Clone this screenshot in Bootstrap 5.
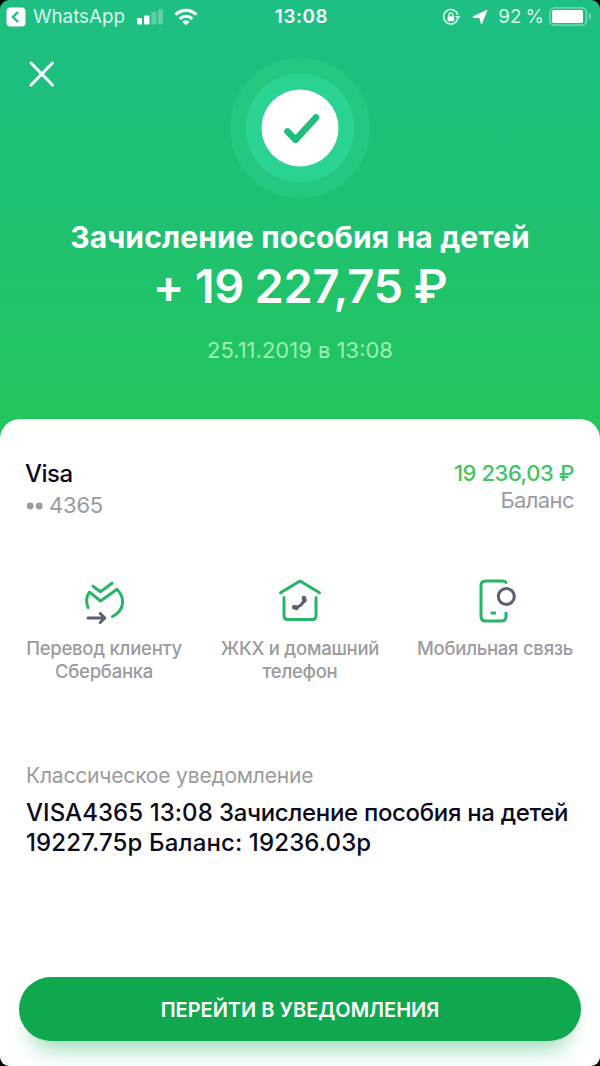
<!DOCTYPE html>
<html lang="ru">
<head>
<meta charset="utf-8">
<meta name="viewport" content="width=device-width, initial-scale=1">
<title>Зачисление пособия на детей</title>
<link href="https://cdn.jsdelivr.net/npm/bootstrap@5.3.0/dist/css/bootstrap.min.css" rel="stylesheet">
<style>
body{background:#000;font-family:Inter,"Liberation Sans",sans-serif;color:#0b0b1c}
svg{display:block;flex:none;overflow:visible}
.screen{width:600px;height:1066px;border-radius:9px;background:linear-gradient(#1dbf84 0,#1fc171 220px,#23c65c 419px,#23c65c 100%)}
.statusbar{height:33px;color:#dcfcee;font-size:18.8px;line-height:33px;padding:0 8px 0 6px}
.side{flex:1 1 0}
.back-app{margin-left:7px}
.wifi{margin-left:11px}
.arrow{margin-left:11px}
.percent{margin-left:10px;letter-spacing:.1px;word-spacing:-1.5px}
.battery{margin-left:5px}
.clock{font-weight:600;letter-spacing:.6px;padding-left:5px}
.hero{height:386px;padding-top:24px}
.close-x{left:28px;top:27px}
.hero-title{font-size:30px;line-height:36px;font-weight:700;letter-spacing:.14px;margin-top:20px}
.hero-sum{font-size:47px;line-height:56px;font-weight:600;letter-spacing:-.3px;word-spacing:-.9px;margin-top:3px}
.hero-date{font-size:22px;line-height:28px;color:#9df0b4;margin-top:22px}
.sheet{border-radius:20px 20px 9px 9px;padding:39px 26px 0}
.gray{color:#9b9ba0}
.card-name{font-size:24px;line-height:32px;font-weight:500;letter-spacing:-.5px;margin-left:-1px}
.card-num{font-size:22px;line-height:32px;letter-spacing:-.2px;margin-top:-1px}
.dot-pair{width:17px;margin-right:6px}
.balance{font-size:22px;line-height:28px;font-weight:500;letter-spacing:-.45px;color:#41c463;padding-top:1px}
.balance-label{font-size:22px;line-height:27px;letter-spacing:-.6px}
.actions{margin:56px -26px 0}
.actions svg{margin:0 auto 14px}
.action-label{font-size:18.5px;line-height:23px;font-weight:500;letter-spacing:-.25px}
.shift-left{padding-left:9px;margin-left:-2px;margin-right:2px}
.shift-right{padding-right:9px;margin-left:1px;margin-right:-1px}
.note-label{font-size:21px;line-height:28px;letter-spacing:-.18px;margin-top:79px}
.note-text{font-size:24px;line-height:30px;font-weight:500;letter-spacing:-.32px;margin-top:8px}
.note-sum{letter-spacing:.13px}
.note-card{letter-spacing:.06px}
.cta{height:64px;margin:0 -7px 25px;--bs-btn-bg:#0fa84e;--bs-btn-color:#fff;--bs-btn-border-width:0;--bs-btn-font-size:20px;--bs-btn-font-weight:600;padding-top:8px;box-shadow:0 20px 22px -12px rgba(15,168,78,.42)}
</style>
</head>
<body>
<main class="screen overflow-hidden d-flex flex-column">
  <div class="statusbar d-flex align-items-center">
    <div class="side d-flex align-items-center">
      <svg width="20" height="20" viewBox="0 0 20 20"><rect x=".5" y=".5" width="19" height="19" rx="4" fill="#fff"/><path d="M12 5 7 10l5 5" fill="none" stroke="#1fbf83" stroke-width="2.4"/></svg>
      <span class="back-app">WhatsApp</span>
      <svg class="ms-2" width="30" height="18" viewBox="0 0 30 18"><g fill="#fff"><rect x="4" y="10" width="5" height="6.5" rx="1.2"/><rect x="11" y="7.5" width="5.5" height="9" rx="1.2"/><g opacity=".28"><rect x="18.5" y="4" width="5" height="12.5" rx="1.2"/><rect x="25" y="1" width="5" height="15.5" rx="1.2"/></g></g></svg>
      <svg class="wifi" width="24" height="18" viewBox="0 0 24 18"><g fill="none" stroke="#fff" stroke-width="3.2"><path d="M1.5 6.6a15 15 0 0 1 21 0"/><path d="M5.7 10.8a9 9 0 0 1 12.6 0"/></g><path d="M12 17.200 8.300 13.700a5.200 5.200 0 0 1 7.400 0z" fill="#fff"/></svg>
    </div>
    <div class="clock text-white">13:08</div>
    <div class="side d-flex align-items-center justify-content-end">
      <svg width="19" height="18" viewBox="0 0 19 18" fill="none" stroke="#dcfcee" stroke-width="1.6"><path d="M15.6 11.2A7.2 7.2 0 1 1 15.8 7"/><path d="M13 8h5.6l-2.8 3.4z" fill="#dcfcee" stroke="none"/><rect x="5.6" y="8.2" width="6.6" height="5" rx=".7" fill="#fff" stroke="none"/><path d="M7 8.500V6.700a1.900 1.900 0 0 1 3.800 0v1.800" stroke-width="1.3"/></svg>
      <svg class="arrow" width="16" height="16" viewBox="0 0 16 16"><path d="M15 1.200 9.400 15 8 8.800.8 8z" fill="#fff" stroke="#fff" stroke-width="1" stroke-linejoin="round"/></svg>
      <span class="percent">92 %</span>
      <svg class="battery" width="43" height="19" viewBox="0 0 43 19"><rect x="1" y=".9" width="36.5" height="17.2" rx="4.5" fill="none" stroke="#83dfba" stroke-width="1.3"/><rect x="3" y="3" width="31" height="13" rx="1.8" fill="#fff"/><path d="M40 6.2q2 1 2 3.300t-2 3.300z" fill="#83dfba"/></svg>
    </div>
  </div>
  <header class="hero position-relative text-center text-white">
    <button class="close-x position-absolute btn p-0 border-0" aria-label="Закрыть">
      <svg width="28" height="28" viewBox="0 0 28 28"><path d="m3 3 21.5 22M24.5 3 3 25" stroke="#fff" stroke-width="3" stroke-linecap="round"/></svg>
    </button>
    <svg class="mx-auto" width="142" height="142" viewBox="0 0 142 142"><circle cx="71" cy="71" r="70" fill="#25c880"/><circle cx="71" cy="71" r="54.5" fill="#2bd392"/><circle cx="71" cy="71" r="38.5" fill="#fff"/><path d="m58.5 74.5 8 8.300 20.500-22.300" fill="none" stroke="#1fbf7b" stroke-width="6.600" stroke-linecap="round" stroke-linejoin="round"/></svg>
    <h1 class="hero-title mb-0">Зачисление пособия на детей</h1>
    <div class="hero-sum">+ 19 227,75 ₽</div>
    <div class="hero-date">25.11.2019 в 13:08</div>
  </header>
  <section class="sheet bg-white flex-grow-1 d-flex flex-column">
    <div class="d-flex justify-content-between">
      <div>
        <div class="card-name">Visa</div>
        <div class="card-num gray d-flex align-items-center"><svg class="dot-pair" width="17" height="8" viewBox="0 0 17 8" fill="#9b9ba0"><circle cx="4.2" cy="5" r="3.4"/><circle cx="13.2" cy="5" r="3.4"/></svg>4365</div>
      </div>
      <div class="text-end">
        <div class="balance">19 236,03 ₽</div>
        <div class="balance-label gray">Баланс</div>
      </div>
    </div>
    <div class="actions d-flex text-center">
      <div class="col shift-left">
        <svg width="46" height="46" viewBox="0 0 46 46" fill="none" stroke="#27b467" stroke-width="3" stroke-linecap="round" stroke-linejoin="round"><path d="m12 9.200 7.500 5.500L31 6.200M7 30.500C4.800 25 5.200 19.500 8.500 15.200l11 8.800 16.500-11.700c9 9.500 7 21.500-4.500 27.200"/><path d="M7 41h16.500M19.200 36.500l4.700 4.500-4.700 4.500" stroke="#5b6074"/></svg>
        <div class="action-label gray">Перевод клиенту<br>Сбербанка</div>
      </div>
      <div class="col">
        <svg width="46" height="46" viewBox="0 0 46 46" fill="none" stroke="#27b467" stroke-width="3" stroke-linecap="round" stroke-linejoin="round"><path d="M3.500 15.800 23 4l19.500 11.800"/><path d="M7 20.500v18.500q0 3.500 3.500 3.500h25q3.500 0 3.500-3.500V20.500"/><path d="M17.500 30.700C22.500 30.500 26.800 26.500 27.300 21.500" stroke="#5b6074" stroke-width="3"/><path d="m17.200 30.200 2.400.6M26.900 21l.6 2.600" stroke="#5b6074" stroke-width="4.600"/></svg>
        <div class="action-label gray">ЖКХ и домашний<br>телефон</div>
      </div>
      <div class="col shift-right">
        <svg width="46" height="46" viewBox="-2 0 46 46" fill="none" stroke="#27b467" stroke-width="3" stroke-linecap="round"><path d="M32 5.500Q31.500 4 28.500 4H11.500Q7 4 7 8.500v31q0 4.500 4.500 4.500h16q4.500 0 4.500-4.500v-3.500"/><path d="M18 36h2.500" stroke-linecap="square"/><circle cx="32.300" cy="19.500" r="8" stroke="#5b6074"/></svg>
        <div class="action-label gray">Мобильная связь</div>
      </div>
    </div>
    <div class="note-label gray">Классическое уведомление</div>
    <div class="note-text text-nowrap"><span class="note-card">VISA4365 13:08</span> Зачисление пособия на детей<br><span class="note-sum">19227.75р Баланс: 19236.03р</span></div>
    <button class="cta btn rounded-pill mt-auto">ПЕРЕЙТИ В УВЕДОМЛЕНИЯ</button>
  </section>
</main>
<script src="https://cdn.jsdelivr.net/npm/bootstrap@5.3.0/dist/js/bootstrap.bundle.min.js"></script>
</body>
</html>
